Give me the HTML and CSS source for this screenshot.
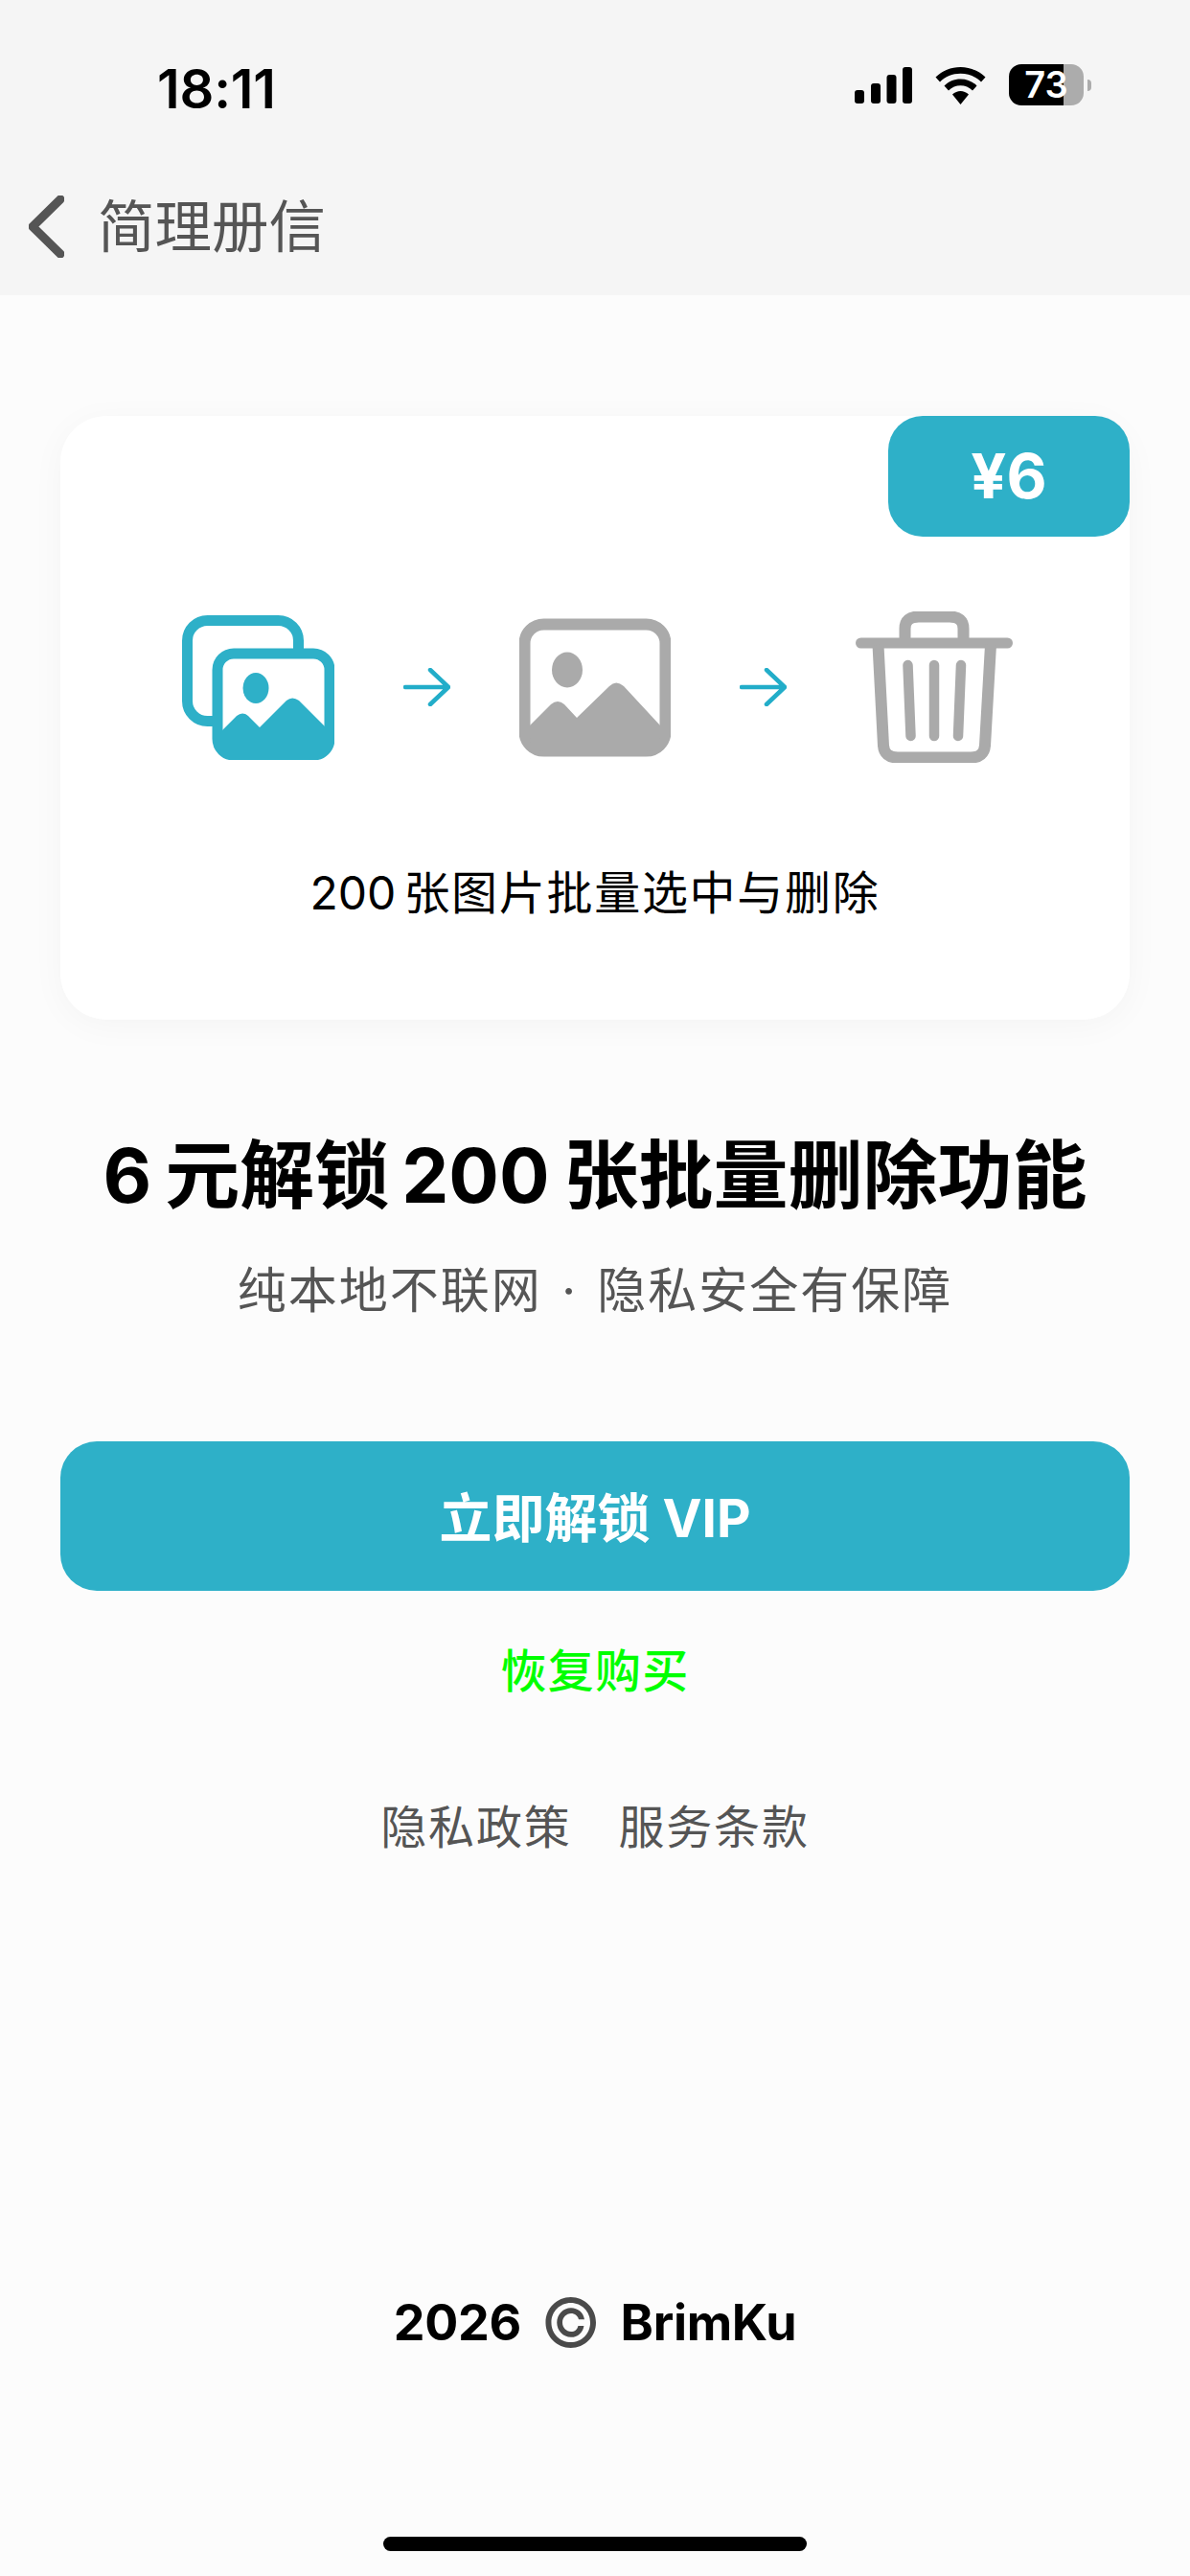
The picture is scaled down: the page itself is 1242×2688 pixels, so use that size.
FILE: index.html
```html
<!DOCTYPE html>
<html lang="zh-CN">
<head>
<meta charset="utf-8">
<title>简理册信</title>
<link rel="stylesheet" href="styles.css">
</head>
<body>
<div class="page">
  <header class="header">
    <div class="status">
      <span class="time">18:11</span>
      <div class="status-icons">
        <svg class="signal" width="60" height="38" viewBox="0 0 60 38"><rect x="0" y="24" width="10" height="14" rx="3"/><rect x="17" y="17" width="10" height="21" rx="3"/><rect x="33.500" y="8" width="10" height="30" rx="3"/><rect x="50" y="0" width="10" height="38" rx="3"/></svg>
        <svg class="wifi" width="53" height="39" viewBox="0 0 53 39"><path d="M26.500 0C16.500 0 7.500 4 0.500 10.500L5 15.500C10.500 10 18 6.800 26.500 6.800S42.500 10 48 15.500L52.500 10.500C45.500 4 36.500 0 26.500 0Z"/><path d="M26.500 12.500C20 12.500 14 15 9.500 19.500L14 24.500C17.500 21.200 21.800 19.300 26.500 19.300S35.500 21.200 39 24.500L43.500 19.500C39 15 33 12.500 26.500 12.500Z"/><path d="M26.500 25C23.500 25 20.500 26.200 18 28.500L26.500 39L35 28.500C32.500 26.200 29.500 25 26.500 25Z"/></svg>
        <div class="battery">
          <div class="battery-body">73</div>
          <span class="battery-nub"></span>
        </div>
      </div>
    </div>
    <nav class="navbar">
      <svg class="back" width="37" height="65" viewBox="0 0 37 65"><path d="M33 4L4 32.500L33 61" fill="none" stroke="#555" stroke-width="9" stroke-linecap="round" stroke-linejoin="round"/></svg>
      <span class="nav-title">简理册信</span>
    </nav>
  </header>

  <main class="content">
    <section class="card">
      <div class="badge">¥6</div>
      <div class="flow">
        <svg width="159" height="151" viewBox="0 0 159 151">
          <rect x="5.500" y="5.500" width="116" height="105" rx="21" fill="none" stroke="#2eb0c8" stroke-width="11"/>
          <rect x="37" y="40" width="117" height="106" rx="17" fill="#fff" stroke="#2eb0c8" stroke-width="11"/>
          <ellipse cx="77" cy="76" rx="13.500" ry="16" fill="#2eb0c8"/>
          <path d="M42 120L57 105Q63 100 69 105L81 117L109 89Q115 84 122 89L149 116V146H42Z" fill="#2eb0c8"/>
        </svg>
        <svg width="49" height="40" viewBox="0 0 49 40"><path d="M2 20H47M28 2L47 20L28 38" fill="none" stroke="#22adc9" stroke-width="4.500" stroke-linecap="round" stroke-linejoin="round"/></svg>
        <svg width="158" height="145" viewBox="0 0 158 145">
          <rect x="5.500" y="6.500" width="147" height="132" rx="20" fill="none" stroke="#aaa" stroke-width="12"/>
          <ellipse cx="50" cy="54" rx="16" ry="18.500" fill="#aaa"/>
          <path d="M11 112L33 90Q40 84 47 90L60 104L94 71Q101 64 109 71L147 112V125Q147 139 133 139H25Q11 139 11 125Z" fill="#aaa"/>
        </svg>
        <svg width="49" height="40" viewBox="0 0 49 40"><path d="M2 20H47M28 2L47 20L28 38" fill="none" stroke="#22adc9" stroke-width="4.500" stroke-linecap="round" stroke-linejoin="round"/></svg>
        <svg width="164" height="158" viewBox="0 0 164 158">
          <path d="M51.500 30V18Q51.500 5.500 66 5.500H98Q112.500 5.500 112.500 18V30" fill="none" stroke="#aaa" stroke-width="12"/>
          <path d="M5.500 33H158.500" fill="none" stroke="#aaa" stroke-width="11" stroke-linecap="round"/>
          <path d="M23.500 35L29 140Q30 152.500 44 152.500H120Q134 152.500 135 140L141 35" fill="none" stroke="#aaa" stroke-width="12"/>
          <path d="M54.500 56L57.500 130M82 56V130M110 56L107 130" fill="none" stroke="#aaa" stroke-width="10.500" stroke-linecap="round"/>
        </svg>
      </div>
      <p class="caption"><span class="caption-num">200</span>张图片批量选中与删除</p>
    </section>

    <h1 class="title"><span class="title-six">6</span>元解锁<span class="title-num">200</span>张批量删除功能</h1>
    <p class="subtitle">纯本地不联网 · 隐私安全有保障</p>

    <button class="cta">立即解锁 VIP</button>
    <a class="restore">恢复购买</a>
    <div class="links"><a>隐私政策</a><a>服务条款</a></div>
  </main>

  <footer class="footer">
    <div class="copyright"><span>2026</span><span class="copy-mark">©</span><span>BrimKu</span></div>
    <div class="home-bar"></div>
  </footer>
</div>
</body>
</html>
```
FILE: styles.css
```css
* { box-sizing: border-box; }
html, body { margin: 0; padding: 0; }
body {
  background: #fcfcfc;
  font-family: Inter, "Noto Sans CJK SC", sans-serif;
  color: #000;
}
.page {
  width: 1242px;
  height: 2688px;
  display: flex;
  flex-direction: column;
  overflow: hidden;
}
.header {
  height: 308px;
  background: #f5f5f5;
  flex: none;
}
.status {
  height: 186px;
  padding: 61px 103px 0 164px;
  display: flex;
  justify-content: space-between;
  align-items: flex-start;
}
.time {
  font-size: 56px;
  font-weight: 600;
  line-height: 64px;
  letter-spacing: -0.200px;
}
.status-icons {
  display: flex;
  align-items: flex-start;
  padding-top: 9px;
  gap: 24px;
}
.battery {
  display: flex;
  align-items: center;
  gap: 4px;
  margin-top: -3px;
}
.battery-body {
  width: 78px;
  height: 43px;
  border-radius: 13px;
  background: linear-gradient(90deg, #000 57px, #acacac 57px);
  color: #fff;
  font-size: 38px;
  font-weight: 600;
  line-height: 43px;
  text-align: center;
}
.battery-nub {
  width: 4px;
  height: 12px;
  background: #acacac;
  border-radius: 0 6px 6px 0;
}
.navbar {
  display: flex;
  align-items: center;
  padding-left: 30px;
  gap: 35px;
  height: 100px;
}
.nav-title {
  font-size: 59.500px;
  color: #555;
  line-height: 70px;
}
.content {
  display: flex;
  flex-direction: column;
  align-items: center;
  padding: 126px 63px 0;
}
.card {
  position: relative;
  width: 100%;
  height: 630px;
  background: #fff;
  border-radius: 48px;
  box-shadow: 0 6px 36px rgba(0, 0, 0, 0.035);
  padding: 204px 0 0 127px;
}
.badge {
  position: absolute;
  top: 0;
  right: 0;
  width: 252px;
  height: 126px;
  background: #2eb0c8;
  border-radius: 36px;
  color: #fff;
  font-size: 65px;
  font-weight: 700;
  line-height: 126px;
  text-align: center;
}
.flow {
  display: flex;
  align-items: center;
  gap: 72px;
}
.caption {
  margin: 96px 0 0 -127px;
  font-size: 48px;
  letter-spacing: 1.700px;
  line-height: 80px;
  text-align: center;
}
.caption-num {
  margin-right: 8px;
  letter-spacing: 0;
}
.title {
  margin: 113px 0 0;
  font-size: 78px;
  font-weight: 700;
  line-height: 100px;
  text-align: center;
}
.title-six {
  margin-right: 14px;
}
.title-num {
  margin: 0 15px 0 13px;
}
.subtitle {
  margin: 35px 0 0;
  font-size: 51px;
  letter-spacing: 2px;
  word-spacing: 4px;
  line-height: 70px;
  color: #555;
  text-align: center;
}
.cta {
  margin-top: 122px;
  width: 100%;
  height: 156px;
  border: 0;
  border-radius: 38px;
  padding: 0 0 5px;
  background: #2eb0c8;
  color: #fff;
  font-family: inherit;
  font-size: 55px;
  font-weight: 700;
}
.restore {
  margin-top: 49px;
  font-size: 48px;
  font-weight: 500;
  letter-spacing: 1.300px;
  line-height: 70px;
  color: #00ff00;
}
.links {
  margin-top: 93px;
  display: flex;
  gap: 49px;
  font-size: 48px;
  letter-spacing: 1.800px;
  line-height: 70px;
  color: #555;
}
.footer {
  margin-top: auto;
  display: flex;
  flex-direction: column;
  align-items: center;
  padding-bottom: 26px;
}
.copyright {
  display: flex;
  align-items: center;
  gap: 20px;
  font-size: 52px;
  font-weight: 700;
  letter-spacing: -0.300px;
  line-height: 70px;
}
.copy-mark {
  color: #4a4a4a;
  font-size: 70px;
  font-weight: 400;
}
.home-bar {
  margin-top: 188px;
  width: 442px;
  height: 15px;
  border-radius: 8px;
  background: #000;
}
```
